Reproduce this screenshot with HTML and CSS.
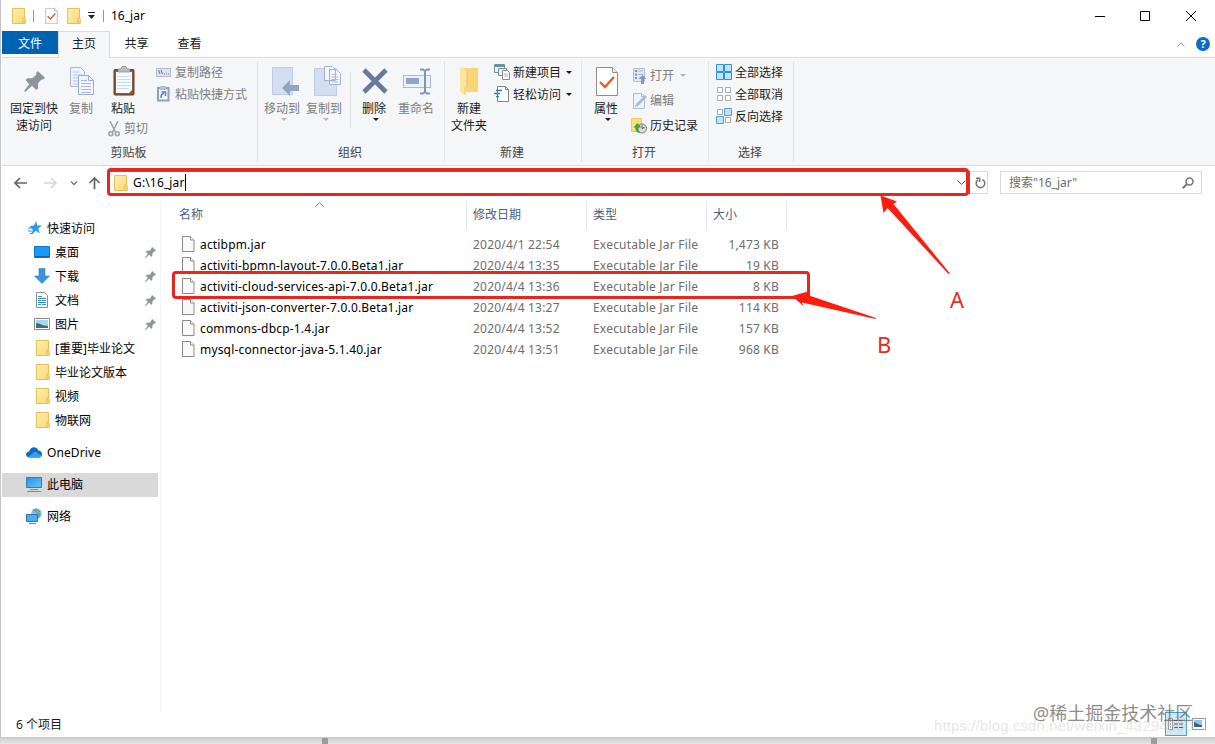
FILE: index.html
```html
<!DOCTYPE html>
<html lang="zh-CN">

<head>
    <meta charset="UTF-8">
    <meta name="viewport" content="width=device-width, initial-scale=1.0">
    <title>16_jar</title>
    <link rel="stylesheet" href="styles.css">
</head>

<body>

    <!-- Shared icons -->
    <svg class="sprite">
        <defs>
            <linearGradient id="gold" x1="0" y1="0" x2="1" y2="1">
                <stop offset="0" stop-color="#fff0ae" />
                <stop offset="1" stop-color="#fbd772" />
            </linearGradient>
            <linearGradient id="sky" x1="0" y1="0" x2="1" y2="1">
                <stop offset="0" stop-color="#2790e6" />
                <stop offset="1" stop-color="#66c4fa" />
            </linearGradient>
        </defs>
        <symbol id="folder" viewBox="0 0 14 16">
            <path d="M.5.5h12v9.5l.8 1v4.5H.5z" fill="url(#gold)" stroke="#e3c05c" />
            <path d="M10.8 15V10.5l1.7-1.2" fill="none" stroke="#e3bd50" />
        </symbol>
        <symbol id="file" viewBox="0 0 13 16">
            <path d="M.5.5h8l3.5 3.5v11.5H.5z" fill="#f9f9f9" stroke="#8b8b8b" />
            <path d="M8.5.5V4H12" fill="#fff" stroke="#8b8b8b" />
        </symbol>
        <symbol id="checked" viewBox="0 0 22 29">
            <path d="M.5.5h16l5 5v23H.5z" fill="#fff" stroke="#8c8c8c" />
            <path d="M16.5.5v5h5" fill="#eee" stroke="#8c8c8c" />
            <path d="M4 15l5 5 9-10" fill="none" stroke="#e2611d" stroke-width="2.4" />
        </symbol>
        <symbol id="pin" viewBox="0 0 20 20">
            <path d="M13 0l7 6.500-2 1.800-1.500-.3-3.200 4 .2 4.500-1.800 1.500-4-4L1 20l-1-1 5-6.500-3.500-4 1.800-1.700 4.500.2 4-3.500-.3-1.500z" fill="#8e959b" />
        </symbol>
        <symbol id="pages" viewBox="0 0 24 28">
            <path d="M.5.5h10l4 4v15H.5z" fill="#eef3fb" stroke="#a6b6d4" />
            <path d="M3 5h6M3 8h9M3 11h9M3 14h9M3 17h9" stroke="#b7c6e2" />
            <path d="M8.500 8.500h10l5 5v14h-15z" fill="#f2f6fc" stroke="#9baecf" />
            <path d="M18.500 8.500v5h5" fill="none" stroke="#9baecf" />
            <path d="M11 13.500h6M11 16.500h10M11 19.500h10M11 22.500h10M11 25.500h10" stroke="#a7badb" />
        </symbol>
    </svg>

    <div class="window">
        <div class="title-bar">
            <svg class="title-folder" width="14" height="16"><use href="#folder" /></svg>
            <span class="title-line"></span>
            <svg class="title-check" width="13" height="16"><use href="#checked" /></svg>
            <svg class="title-folder2" width="14" height="16"><use href="#folder" /></svg>
            <svg class="title-drop" width="7" height="7" viewBox="0 0 7 7"><path d="M0 .5h7" stroke="#222" /><path d="M0 3h7L3.500 7z" fill="#222" /></svg>
            <span class="title-line second"></span>
            <span class="title-text">16_jar</span>
            <svg class="window-buttons" width="102" height="12" viewBox="0 0 102 12" fill="none" stroke="#000">
                <path d="M0 6.500h10M45.500 1.500h9v9h-9zM91 1l10 10M101 1L91 11" />
            </svg>
        </div>

        <div class="tabs">
            <div class="tab file-tab">文件</div>
            <div class="tab active">主页</div>
            <div class="tab">共享</div>
            <div class="tab">查看</div>
            <svg class="tabs-chevron" width="8" height="5" viewBox="0 0 8 5"><path d="M.5 4.500L4 1l3.500 3.500" fill="none" stroke="#9a9a9a" /></svg>
            <div class="help">?</div>
        </div>

        <div class="ribbon">
            <div class="group clipboard">
                <div class="group-body">
                    <div class="big pin-button">
                        <div class="big-icon"><svg width="21" height="21"><use href="#pin" /></svg></div>
                        固定到快<br>速访问
                    </div>
                    <div class="big copy-button off">
                        <div class="big-icon"><svg width="24" height="28"><use href="#pages" /></svg></div>
                        复制
                    </div>
                    <div class="paste-column">
                        <div class="big">
                            <div class="big-icon">
                                <svg width="22" height="30" viewBox="0 0 22 30">
                                    <rect x="1" y="3.500" width="20" height="25.500" rx="1" fill="#8a5a34" stroke="#5e3d25" />
                                    <path d="M3 6h16v18l-3 3H3z" fill="#f7fbff" />
                                    <path d="M4 10.500h14M4 13.500h14M4 16.500h14M4 19.500h14M4 22.500h12" stroke="#c4dcf0" />
                                    <path d="M5 6V3h3l1-2.500h4L14 3h3v3z" fill="#b9bfc5" stroke="#7b8187" stroke-width=".7" />
                                </svg>
                            </div>
                            粘贴
                        </div>
                        <div class="small off cut">
                            <svg width="12" height="16" viewBox="0 0 12 16" fill="none" stroke="#95a2b4" stroke-width="1.500">
                                <path d="M2 0l5.500 11M10 0L4.500 11" />
                                <circle cx="2.800" cy="12.800" r="2" /><circle cx="9.200" cy="12.800" r="2" />
                            </svg>
                            剪切
                        </div>
                    </div>
                    <div class="small-list">
                        <div class="small off">
                            <svg width="15" height="9" viewBox="0 0 15 9"><rect x=".5" y=".5" width="14" height="8" fill="#dfe3f5" stroke="#b3bad8" /><path d="M2.500 2l1.500 4M5 2l1.500 4M8 6h1M10 6h1M12 6h1" stroke="#66719e" /></svg>
                            复制路径
                        </div>
                        <div class="small off">
                            <svg width="15" height="16" viewBox="0 0 15 16"><path d="M2 2h10.500v12.500H2z" fill="#f4f7fc" stroke="#8ba0c4" stroke-width="2" /><path d="M4 0h6v4H4z" fill="#b1bfd8" /><path d="M5 12c0-3 1-4.500 3-4.500M5.500 6h4v4" fill="none" stroke="#6482b6" stroke-width="1.600" /></svg>
                            粘贴快捷方式
                        </div>
                    </div>
                </div>
                <div class="group-label">剪贴板</div>
            </div>

            <div class="group organize">
                <div class="group-body">
                    <div class="big move-button off">
                        <div class="big-icon">
                            <svg width="27" height="29" viewBox="0 0 27 29"><path d="M.5.5h20v27H.5z" fill="#d3dff1" stroke="#becde5" /><path d="M10 21l8-8v5h9v6h-9v5z" fill="#92a7c2" /></svg>
                        </div>
                        移动到<i class="drop"></i>
                    </div>
                    <div class="big copyto-button off">
                        <div class="big-icon">
                            <svg width="27" height="31" viewBox="0 0 27 31"><path d="M.5 2.500h22v27H.5z" fill="#d3dff1" stroke="#becde5" /><path d="M10.500.5h8l3 3v11h-11zM15.500 3.500h7l4 4v11h-11z" fill="#f4f7fc" stroke="#9fb1d0" /><path d="M17.500 8.500h5M17.500 11h7M17.500 13.500h7M17.500 16h7" stroke="#acbddb" /></svg>
                        </div>
                        复制到<i class="drop"></i>
                    </div>
                    <div class="divider"></div>
                    <div class="big delete-button">
                        <div class="big-icon"><svg width="26" height="26" viewBox="0 0 26 26"><path d="M2 2l22 22M24 2L2 24" stroke="#65799d" stroke-width="4.600" /></svg></div>
                        删除<i class="drop"></i>
                    </div>
                    <div class="big rename-button off">
                        <div class="big-icon"><svg width="28" height="27" viewBox="0 0 28 27"><rect x=".5" y="7.500" width="27" height="12" fill="#eef3fb" stroke="#a7b9d7" /><path d="M3 10h13v6H3z" fill="#8ca5cb" /><path d="M17 1.500h3l2 1.500 2-1.500h3M22 3v21M17 25.500h3l2-1.500 2 1.500h3" fill="none" stroke="#8094b4" stroke-width="2" /></svg></div>
                        重命名
                    </div>
                </div>
                <div class="group-label">组织</div>
            </div>

            <div class="group create">
                <div class="group-body">
                    <div class="big new-button">
                        <div class="big-icon"><svg width="19" height="29" viewBox="0 0 19 29"><path d="M2 1h16v24H6z" fill="#f8d577" /><path d="M0 0l7 3v16l-2 2v7l-5-3z" fill="#ffe6a0" /><path d="M7 3v16l-2 2v7" fill="none" stroke="#e8c264" /></svg></div>
                        新建<br>文件夹
                    </div>
                    <div class="small-list">
                        <div class="small">
                            <svg width="17" height="16" viewBox="0 0 17 16"><path d="M.5.5h10v8H.5z" fill="#e8f5fa" stroke="#738f9d" /><path d="M1 2h9" stroke="#4b9abb" stroke-width="2" /><path d="M4.500 4.500h8v7h-8z" fill="#e6f3fa" stroke="#738f9d" /><path d="M8.500 6.500h5l2 2v7h-7z" fill="#fff" stroke="#888" /><path d="M10 10h4M10 12h4" stroke="#b6a9c4" /></svg>
                            新建项目<i class="drop"></i>
                        </div>
                        <div class="small">
                            <svg width="17" height="16" viewBox="0 0 17 16"><path d="M3.500.5h8l3 3v12h-11z" fill="#fff" stroke="#858585" /><path d="M11.500.5v3h3" fill="none" stroke="#858585" /><path d="M2 4.500h6M0 7.500h6M2 10.500h3" stroke="#2286b1" stroke-width="1.400" /></svg>
                            轻松访问<i class="drop"></i>
                        </div>
                    </div>
                </div>
                <div class="group-label">新建</div>
            </div>

            <div class="group open">
                <div class="group-body">
                    <div class="big properties-button">
                        <div class="big-icon"><svg width="22" height="29"><use href="#checked" /></svg></div>
                        属性<i class="drop"></i>
                    </div>
                    <div class="small-list roomy">
                        <div class="small off">
                            <svg width="16" height="16" viewBox="0 0 16 16"><path d="M2.500.5h11v13h-11z" fill="#e3eaf6" stroke="#b0bed7" /><path d="M4 3h2M4 6.500h2M4 10h2" stroke="#7a8fb8" stroke-width="2" /><path d="M7 3h5M7 6.500h5" stroke="#a7b6d0" /><path d="M11.500 7l4 4h-2.500v5h-3v-5H7.500z" fill="#8799b8" /></svg>
                            打开<i class="drop"></i>
                        </div>
                        <div class="small off">
                            <svg width="16" height="16" viewBox="0 0 16 16"><path d="M2.500.5h8l3 3v12h-11z" fill="#f1f5fb" stroke="#aebbd0" /><path d="M4 14.500L5 11 14 2l2 2-9 9z" fill="#a8bcda" /><path d="M10.500.5v3h3" fill="none" stroke="#aebbd0" /></svg>
                            编辑
                        </div>
                        <div class="small">
                            <svg width="16" height="16" viewBox="0 0 16 16"><path d="M.5.5h10v13H.5z" fill="#fbe07e" stroke="#e9c964" /><circle cx="11" cy="10.500" r="4.500" fill="#ddd" stroke="#777" /><path d="M11 7.500v3l2.500-1" fill="none" stroke="#555" /><path d="M8 15c-3-1-4-3-3.500-5.500H2.500L6.500 5l3.500 4.500H7.500c-.3 2 .2 3.500 1.500 5z" fill="#3baa3c" /></svg>
                            历史记录
                        </div>
                    </div>
                </div>
                <div class="group-label">打开</div>
            </div>

            <div class="group select">
                <div class="group-body">
                    <div class="small-list">
                        <div class="small">
                            <svg width="16" height="16" viewBox="0 0 16 16" fill="#bfe4fc" stroke="#2f91d2"><path d="M.5.5h7v7h-7zM8.500.5h7v7h-7zM.5 8.500h7v7h-7zM8.500 8.500h7v7h-7z" /></svg>
                            全部选择
                        </div>
                        <div class="small">
                            <svg width="16" height="16" viewBox="0 0 16 16" fill="#fff" stroke="#aaa"><path d="M1.500 1.500h5v5h-5zM9.500 1.500h5v5h-5zM1.500 9.500h5v5h-5zM9.500 9.500h5v5h-5z" /></svg>
                            全部取消
                        </div>
                        <div class="small">
                            <svg width="16" height="16" viewBox="0 0 16 16"><path d="M1.500 1.500h5v5h-5zM9.500 9.500h5v5h-5z" fill="#fff" stroke="#aaa" /><path d="M8.500.5h7v7h-7zM.5 8.500h7v7h-7z" fill="#bfe4fc" stroke="#4a9fd8" /></svg>
                            反向选择
                        </div>
                    </div>
                </div>
                <div class="group-label">选择</div>
            </div>
        </div>

        <div class="nav-bar">
            <svg class="nav-arrows" width="88" height="14" viewBox="0 0 88 14" fill="none" stroke-width="1.700">
                <path d="M1 7h12M6 2L1 7l5 5" stroke="#666" />
                <path d="M30 7h12M37 2l5 5-5 5" stroke="#d6d6d6" />
                <path d="M57 5.500l3 3 3-3" stroke="#777" stroke-width="1.300" />
                <path d="M80.500 13V2M75.500 7l5-5 5 5" stroke="#666" />
            </svg>
            <div class="address">
                <svg width="14" height="16"><use href="#folder" /></svg>
                <span class="path">G:\16_jar</span>
                <svg class="address-chevron" width="9" height="6" viewBox="0 0 9 6"><path d="M.5.5l4 4 4-4" fill="none" stroke="#555" /></svg>
                <div class="mark mark-address"></div>
            </div>
            <div class="refresh">
                <svg width="11" height="12" viewBox="0 0 11 12" fill="none" stroke="#777" stroke-width="1.600"><path d="M7.500 2.500a4.300 4.300 0 1 1-4.500.3M1 1.300h3.600V5" /></svg>
            </div>
            <div class="search">
                搜索"16_jar"
                <svg width="12" height="12" viewBox="0 0 12 12" fill="none" stroke="#777"><circle cx="7.500" cy="4.500" r="3.500" stroke-width="1.600" /><path d="M5 7L.8 11.200" stroke-width="2" /></svg>
            </div>
        </div>

        <div class="content">
            <div class="tree">
                <div class="node">
                    <svg width="14" height="14" viewBox="0 0 14 14"><path d="M8 0l1.300 4.500 4.700-.2-3.700 3.200 1.500 5L8 9.800 3.500 13.500l1.200-5L1.500 5l4.500-.4z" fill="#2e9be6" /><path d="M0 7h4M0 10h4M2 12.500h3" stroke="#3b8dc8" /></svg>
                    快速访问
                </div>
                <div class="node child">
                    <svg width="16" height="12" viewBox="0 0 16 12"><path d="M.5.5h15v11H.5z" fill="#1b9afb" stroke="#0d76c9" /><path d="M1 10.500h14" stroke="#0f65ab" /></svg>
                    桌面<svg class="pin" width="11" height="11"><use href="#pin" /></svg>
                </div>
                <div class="node child">
                    <svg width="16" height="16" viewBox="0 0 16 16"><path d="M5 .5h6V8h4.500L8 15.500.5 8H5z" fill="#3c92dc" stroke="#2f7fc4" stroke-width=".6" /></svg>
                    下载<svg class="pin" width="11" height="11"><use href="#pin" /></svg>
                </div>
                <div class="node child">
                    <svg width="16" height="16" viewBox="0 0 16 16"><path d="M2.500.5h8l3 3v12h-11z" fill="#fff" stroke="#8c8c8c" /><path d="M4 4.500h4M4 6.500h8M4 8.500h3M8 8.500h4M4 10.500h8M4 12.500h3M8 12.500h4" stroke="#2f8fd0" /></svg>
                    文档<svg class="pin" width="11" height="11"><use href="#pin" /></svg>
                </div>
                <div class="node child">
                    <svg width="16" height="12" viewBox="0 0 16 12"><path d="M.5.5h15v11H.5z" fill="#fff" stroke="#8c8c8c" /><path d="M2 2h12v8H2z" fill="#a9d6f2" /><path d="M2 5c4 0 6 3 12 3v2H2z" fill="#3f6f72" /></svg>
                    图片<svg class="pin" width="11" height="11"><use href="#pin" /></svg>
                </div>
                <div class="node child folder"><svg width="14" height="16"><use href="#folder" /></svg>[重要]毕业论文</div>
                <div class="node child folder"><svg width="14" height="16"><use href="#folder" /></svg>毕业论文版本</div>
                <div class="node child folder"><svg width="14" height="16"><use href="#folder" /></svg>视频</div>
                <div class="node child folder"><svg width="14" height="16"><use href="#folder" /></svg>物联网</div>
                <div class="node root">
                    <svg width="16" height="11" viewBox="0 0 16 11"><path d="M4 10.500C1 10.500 0 9 0 7.500S1.500 4.500 3.300 4.300C4 1.500 6 .2 8 .2c2.300 0 3.800 1.300 4.500 3.200C15 3.500 16 5.500 16 7.200s-1.300 3.300-3 3.300z" fill="#0f6cc4" /><path d="M2 10l7-5.500 6.500 4.300c-.5 1-1.400 1.700-2.500 1.700H4c-.8 0-1.500-.1-2-.5z" fill="#2ba5e9" /></svg>
                    <span class="latin">OneDrive</span>
                </div>
                <div class="node root selected">
                    <svg width="16" height="15" viewBox="0 0 16 15"><path d="M.5.5h15v10H.5z" fill="url(#sky)" stroke="#3c7ca7" /><path d="M4 12.500h8M1 14.500h14" stroke="#7d8b96" /></svg>
                    此电脑
                </div>
                <div class="node root">
                    <svg width="16" height="16" viewBox="0 0 16 16"><circle cx="10.500" cy="5.500" r="5.300" fill="#8dbdd2" /><path d="M7 2c3 0 3 3 6 3.500 1 2-1 4-2 5M9 1l5 3" fill="none" stroke="#4c87a8" /><path d="M.5 6.500h11v7H.5z" fill="#45b0f5" stroke="#2b74a9" /><path d="M3 15.500h7" stroke="#75858f" /></svg>
                    网络
                </div>
            </div>

            <div class="files">
                <div class="row header">
                    <div class="cell first">名称<svg class="sort" width="9" height="5" viewBox="0 0 9 5"><path d="M.5 4.500l4-4 4 4" fill="none" stroke="#777" /></svg></div>
                    <div class="cell">修改日期</div>
                    <div class="cell">类型</div>
                    <div class="cell">大小</div>
                </div>
                <div class="row">
                    <div class="name"><svg width="13" height="16"><use href="#file" /></svg>actibpm.jar</div>
                    <div class="date">2020/4/1 22:54</div>
                    <div class="type">Executable Jar File</div>
                    <div class="size">1,473 KB</div>
                </div>
                <div class="row">
                    <div class="name"><svg width="13" height="16"><use href="#file" /></svg>activiti-bpmn-layout-7.0.0.Beta1.jar</div>
                    <div class="date">2020/4/4 13:35</div>
                    <div class="type">Executable Jar File</div>
                    <div class="size">19 KB</div>
                </div>
                <div class="row">
                    <div class="name"><svg width="13" height="16"><use href="#file" /></svg>activiti-cloud-services-api-7.0.0.Beta1.jar</div>
                    <div class="date">2020/4/4 13:36</div>
                    <div class="type">Executable Jar File</div>
                    <div class="size">8 KB</div>
                    <div class="mark mark-row"></div>
                </div>
                <div class="row">
                    <div class="name"><svg width="13" height="16"><use href="#file" /></svg>activiti-json-converter-7.0.0.Beta1.jar</div>
                    <div class="date">2020/4/4 13:27</div>
                    <div class="type">Executable Jar File</div>
                    <div class="size">114 KB</div>
                </div>
                <div class="row">
                    <div class="name"><svg width="13" height="16"><use href="#file" /></svg>commons-dbcp-1.4.jar</div>
                    <div class="date">2020/4/4 13:52</div>
                    <div class="type">Executable Jar File</div>
                    <div class="size">157 KB</div>
                </div>
                <div class="row">
                    <div class="name"><svg width="13" height="16"><use href="#file" /></svg>mysql-connector-java-5.1.40.jar</div>
                    <div class="date">2020/4/4 13:51</div>
                    <div class="type">Executable Jar File</div>
                    <div class="size">968 KB</div>
                </div>
            </div>
        </div>

        <div class="status-bar">
            6 个项目
            <div class="view selected-view">
                <svg width="16" height="12" viewBox="0 0 16 12"><path d="M.5.5h4v11h-4z" fill="#fff" stroke="#999" /><path d="M2 3h1M2 6h1M2 9h1" stroke="#555" /><path d="M6 2.500h4M11 2.500h4M6 6h4M11 6h4M6 9.500h4M11 9.500h4" stroke="#555" /></svg>
            </div>
            <svg class="thumb-view" width="14" height="12" viewBox="0 0 14 12"><path d="M.5.5h13v11H.5z" fill="#fff" stroke="#999" /><path d="M2 2h8v7H2z" fill="#8dc5ed" /><path d="M2 4c3 1 4 3 8 3v2H2z" fill="#3d6078" /></svg>
        </div>
    </div>

    <!-- Window below the explorer -->
    <div class="behind">
        <span></span>
        <span></span>
    </div>

    <!-- Annotations -->
    <svg class="arrows" width="1215" height="744">
        <path d="M880.500 195.500L897 201.500 893.500 204 950 273.500 948.500 274 887.500 208 883.500 213z" />
        <path d="M792 296L808 291.500 807.500 295 876 318 875.500 319 802 302.500 804 306.500z" />
    </svg>
    <div class="letter letter-a">A</div>
    <div class="letter letter-b">B</div>
    <div class="blog-url">https://blog.csdn.net/weixin_43294560</div>
    <div class="community">@稀土掘金技术社区</div>

</body>

</html>
```

FILE: styles.css
```css
* {
    box-sizing: border-box;
}

body {
    margin: 0;
    width: 1215px;
    height: 744px;
    overflow: hidden;
    position: relative;
    background: #fff;
    color: #1b1b1b;
    font-family: "Noto Sans", "Noto Sans CJK SC", sans-serif;
    font-size: 12px;
    line-height: 17px;
}

svg {
    display: block;
    flex: none;
}

.sprite {
    position: absolute;
    width: 0;
    height: 0;
}

.window {
    height: 738px;
    border-left: 1px solid #c4c4c8;
    border-bottom: 1px solid #c9c9c9;
    padding-left: 1px;
    display: flex;
    flex-direction: column;
}

/* Title bar */
.title-bar {
    height: 31px;
    display: flex;
    align-items: center;
    padding: 0 18px 0 10px;
}

.title-line {
    width: 1px;
    height: 12px;
    background: #999;
    margin: 0 11px 0 7px;
}

.title-line.second {
    margin: 0 7px 0 8px;
}

.title-folder2 {
    margin-left: 9px;
}

.title-drop {
    margin-left: 7px;
}

.title-text {
    color: #000;
}

.window-buttons {
    margin-left: auto;
}

/* Tabs */
.tabs {
    height: 27px;
    display: flex;
    align-items: stretch;
    border-bottom: 1px solid #dadbdc;
    padding-right: 5px;
}

.tab {
    width: 53px;
    line-height: 25px;
    text-align: center;
}

.file-tab {
    width: 56px;
    height: 23px;
    background: #0063b1;
    color: #fff;
}

.tab.active {
    width: 52px;
    height: 27px;
    background: #f5f6f7;
    border: 1px solid #dadbdc;
    border-bottom: 0;
    line-height: 24px;
}

.tabs-chevron {
    margin: 11px 11px 0 auto;
}

.help {
    width: 14px;
    height: 14px;
    margin-top: 6px;
    border-radius: 50%;
    background: #0a6cc8;
    color: #fff;
    font-size: 11px;
    font-weight: bold;
    line-height: 14px;
    text-align: center;
}

/* Ribbon */
.ribbon {
    height: 108px;
    display: flex;
    background: #f5f6f7;
    border-bottom: 1px solid #dadbdc;
    padding: 3px 0;
}

.group {
    border-right: 1px solid #e2e3e4;
    display: flex;
    flex-direction: column;
}

.clipboard {
    width: 256px;
}

.organize {
    width: 187px;
}

.create {
    width: 137px;
}

.open {
    width: 127px;
}

.select {
    width: 85px;
}

.group-body {
    display: flex;
    height: 84px;
    padding-top: 4px;
}

.group-label {
    text-align: center;
    color: #444;
    line-height: 18px;
    padding-right: 2px;
}

.big {
    display: flex;
    flex-direction: column;
    align-items: center;
    text-align: center;
    white-space: nowrap;
}

.big-icon {
    height: 35px;
    display: flex;
    align-items: center;
    padding: 0 0 3px 2px;
}

.big > .drop {
    margin: 1px 0 0 4px;
}

.off {
    color: #7b7d80;
}

.pin-button {
    display: block;
    width: 64px;
}

.pin-button .big-icon,
.new-button .big-icon {
    justify-content: center;
    padding-left: 0;
}

.copy-button {
    width: 30px;
}

.paste-column {
    width: 54px;
}

.small {
    display: flex;
    align-items: center;
    gap: 4px;
    height: 22px;
    white-space: nowrap;
}

.cut {
    padding-left: 12px;
    height: 23px;
}

.small-list {
    margin-top: -4px;
}

.clipboard .small-list {
    margin-left: 6px;
}

.move-button {
    width: 48px;
}

.copyto-button {
    width: 36px;
}

.move-button .big-icon,
.copyto-button .big-icon {
    padding-left: 6px;
}

.divider {
    width: 1px;
    height: 56px;
    margin: 7px 0 0 8px;
    background: #e2e3e4;
}

.delete-button {
    width: 46px;
}

.rename-button {
    width: 38px;
}

.new-button {
    display: block;
    width: 48px;
}

.create .small-list,
.open .small-list {
    margin-left: 1px;
}

.create .small {
    gap: 2px;
}

.properties-button {
    width: 48px;
}

.roomy {
    padding-top: 2px;
}

.roomy .small {
    height: 25px;
    gap: 3px;
}

.select .small-list {
    margin-left: 7px;
}

.select .small {
    gap: 3px;
}

.drop {
    border: 3px solid transparent;
    border-top-color: currentColor;
    border-bottom: 0;
    margin-left: 3px;
}

.off .drop {
    border-top-color: #b5b5b5;
}

/* Address row */
.nav-bar {
    height: 35px;
    display: flex;
    align-items: flex-start;
    padding: 5px 13px 0 13px;
}

.nav-arrows {
    margin: 5px 1px 0 -1px;
}

.address {
    position: relative;
    width: 862px;
    height: 23px;
    margin-left: 5px;
    border: 1px solid #2a7ab8;
    display: flex;
    align-items: center;
    padding: 0 3px 0 5px;
    color: #000;
}

.path {
    margin-left: 5px;
    height: 17px;
    border-right: 1px solid #000;
    letter-spacing: 0.15px;
}

.address-chevron {
    margin-left: auto;
}

.refresh {
    width: 18px;
    height: 23px;
    border: 1px solid #d9d9d9;
    border-left: 0;
    display: flex;
    align-items: center;
    justify-content: center;
    padding-left: 3px;
}

.search {
    width: 202px;
    height: 23px;
    margin-left: 12px;
    border: 1px solid #d9d9d9;
    display: flex;
    align-items: center;
    justify-content: space-between;
    padding: 0 7px 0 8px;
    color: #6d6d6d;
}

/* Content */
.content {
    flex: 1;
    display: flex;
    min-height: 0;
}

.tree {
    width: 159px;
    padding: 16px 2px 0 0;
    border-right: 1px solid #f2f2f2;
    color: #000;
}

.node {
    height: 24px;
    display: flex;
    align-items: center;
    gap: 5px;
    padding: 0 2px 2px 26px;
    white-space: nowrap;
}

.node.child {
    padding-left: 32px;
}

.node.folder {
    padding-left: 34px;
}

.node.root {
    margin-top: 8px;
    padding-left: 24px;
}

.node.selected {
    background: #d9d9d9;
}

.node .pin {
    margin-left: auto;
}

.latin {
    letter-spacing: 0.1px;
}

.files {
    padding-left: 11px;
}

.row {
    position: relative;
    display: grid;
    grid-template-columns: 295px 120px 120px 80px;
    height: 21px;
    line-height: 21px;
    color: #6d6d6d;
    letter-spacing: 0.2px;
}

.row.header {
    height: 33px;
    color: #4c607a;
    letter-spacing: 0;
}

.cell {
    position: relative;
    height: 28px;
    line-height: 27px;
    padding-left: 6px;
    border-right: 1px solid #e5e5e5;
}

.cell.first {
    padding-left: 7px;
}

.sort {
    position: absolute;
    left: 143px;
    top: 1px;
}

.name {
    display: flex;
    align-items: center;
    gap: 5px;
    padding-left: 10px;
    color: #000;
    letter-spacing: 0.17px;
}

.name svg {
    margin-top: -1px;
}

.date,
.type {
    padding-left: 6px;
}

.size {
    text-align: right;
    padding-right: 8px;
}

/* Status bar */
.status-bar {
    height: 26px;
    display: flex;
    align-items: center;
    padding: 0 9px 0 14px;
}

.view {
    width: 22px;
    height: 24px;
    margin-left: auto;
    display: flex;
    align-items: center;
    justify-content: center;
}

.selected-view {
    background: #cfe8f7;
    border: 1px solid #3fa4dd;
}

.thumb-view {
    margin-left: 5px;
}

.behind {
    height: 6px;
    background: linear-gradient(#d0d0d0, #e6e6e6);
    display: flex;
    justify-content: space-between;
    padding: 0 58px 0 322px;
}

.behind span {
    width: 6px;
    background: #9c9c9c;
}

/* Annotations */
.mark {
    position: absolute;
    border: 3px solid #e9261c;
    border-radius: 4px;
}

.mark-address {
    left: -2px;
    top: -4px;
    width: 862px;
    height: 28px;
}

.mark-row {
    left: 0;
    top: -5px;
    width: 638px;
    height: 28px;
}

.arrows {
    position: absolute;
    left: 0;
    top: 0;
    fill: #fe1c10;
    pointer-events: none;
}

.letter {
    position: absolute;
    font-size: 22px;
    line-height: 24px;
    color: #ea2a20;
}

.letter-a {
    left: 950px;
    top: 287px;
}

.letter-b {
    left: 877px;
    top: 332px;
}

.blog-url {
    position: absolute;
    left: 934px;
    top: 716px;
    font-family: "Liberation Sans", sans-serif;
    font-size: 15px;
    line-height: 20px;
    letter-spacing: 0.1px;
    color: rgba(190, 190, 190, 0.4);
}

.community {
    position: absolute;
    left: 1033px;
    top: 701px;
    font-size: 18px;
    line-height: 24px;
    color: rgba(110, 110, 110, 0.8);
    white-space: nowrap;
}
```
